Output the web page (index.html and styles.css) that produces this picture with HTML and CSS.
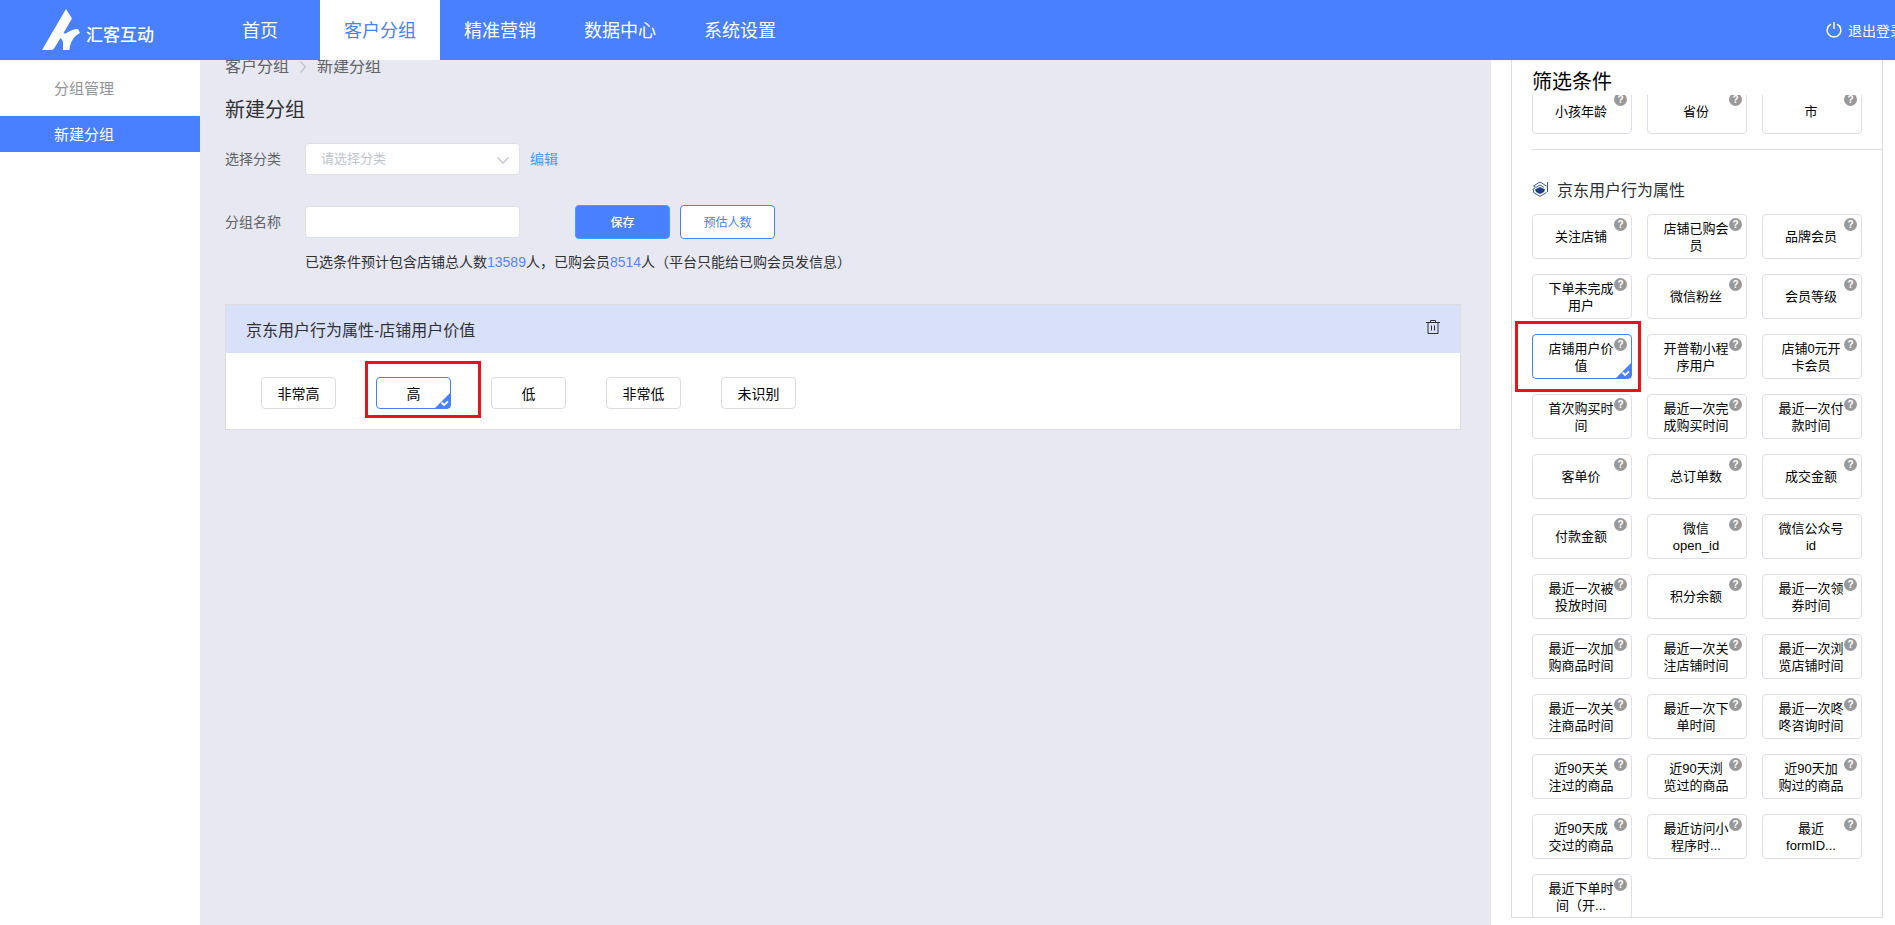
FILE: index.html
```html
<!DOCTYPE html>
<html lang="zh-CN">
<head>
<meta charset="utf-8">
<title>新建分组</title>
<link rel="stylesheet" href="styles.css">
</head>
<body>
<svg class="defs" aria-hidden="true">
  <symbol id="check" viewBox="0 0 15 15"><path d="M15 0V15H0Z" fill="#4880ff"/><path d="M6.500 9.500l2.500 2.500 4-3.500" fill="none" stroke="#fff" stroke-width="1.800"/></symbol>
</svg>
<header class="topbar">
  <a class="brand" href="#">
    <svg class="brand-mark" viewBox="0 0 38 42"><path d="M24 0L30 9.500 21.500 24C24 26 26 22 32 20.500L36 20 38 24C32 27 28 33 27.500 41H21V35C21 32 20.500 30.500 18.500 29L13 38C11.500 40.500 10.500 41 8 41H0Z" fill="#fff"/></svg>
    <span>汇客互动</span>
  </a>
  <nav class="nav">
    <a href="#">首页</a><a href="#" class="active">客户分组</a><a href="#">精准营销</a><a href="#">数据中心</a><a href="#">系统设置</a>
  </nav>
  <a class="logout" href="#">
    <svg viewBox="0 0 16 16"><path d="M5 2.200A6.800 6.800 0 1 0 11 2.200M8 0V7" fill="none" stroke="#fff" stroke-width="1.500"/></svg>
    <span>退出登录</span>
  </a>
</header>
<div class="body">
  <aside class="sidebar">
    <a href="#">分组管理</a>
    <a href="#" class="active">新建分组</a>
  </aside>
  <main class="main">
    <nav class="crumbs"><a href="#">客户分组</a><svg viewBox="0 0 6 12"><path d="M.5.500L5.500 6 .5 11.500" fill="none" stroke="#c0c4cc" stroke-width="1.300"/></svg><span>新建分组</span></nav>
    <h1>新建分组</h1>
    <form class="form">
      <div class="row">
        <label for="cat">选择分类</label>
        <span class="select"><select id="cat"><option>请选择分类</option></select><svg viewBox="0 0 12 7"><path d="M.5.500L6 6 11.500.500" fill="none" stroke="#c0c4cc" stroke-width="1.300"/></svg></span>
        <a class="edit" href="#">编辑</a>
      </div>
      <div class="row">
        <label for="name">分组名称</label>
        <input id="name" type="text">
        <div class="actions"><button type="button" class="btn primary">保存</button><button type="button" class="btn">预估人数</button></div>
      </div>
      <p class="note">已选条件预计包含店铺总人数<b>13589</b>人，已购会员<b>8514</b>人（平台只能给已购会员发信息）</p>
    </form>
    <section class="card">
      <header><h2>京东用户行为属性-店铺用户价值</h2>
        <button type="button" class="trash" aria-label="删除"><svg viewBox="0 0 14 14"><path d="M0 2.500H14M4.500 2V.500H9.500V2M2 3V13.500H12V3M5.500 5.500V10.500M8.500 5.500V10.500" fill="none" stroke="#303133"/></svg></button>
      </header>
      <div class="options">
        <button type="button">非常高</button>
        <button type="button" class="selected">高<svg class="tick"><use href="#check"/></svg><i class="mark"></i></button>
        <button type="button">低</button>
        <button type="button">非常低</button>
        <button type="button">未识别</button>
      </div>
    </section>
  </main>
  <aside class="filters">
    <h2>筛选条件</h2>
    <div class="list">
      <div class="grid first" data-items="小孩年龄,省份,市"></div>
      <h3><svg viewBox="0 0 16 16"><path d="M1.500 5L8 1 14.500 5M4 6.500L8 4 12 6.500M1.500 5L4 6.500M.5 8.500L3 7M1.500 8.500V11.500L8 15.300 14.500 11.500M15.500 1V11" fill="none" stroke="#3c5a90"/><path d="M8 6L13 8.500 12 11 8 13 4 11 3 8.500Z" fill="#1c3f7c"/></svg>京东用户行为属性</h3>
      <div class="grid" data-items="关注店铺,店铺已购会员,品牌会员,下单未完成用户,微信粉丝,会员等级,*店铺用户价值,开普勒小程序用户,店铺0元开卡会员,首次购买时间,最近一次完成购买时间,最近一次付款时间,客单价,总订单数,成交金额,付款金额,微信 open_id,-微信公众号 id,最近一次被投放时间,积分余额,最近一次领券时间,最近一次加购商品时间,最近一次关注店铺时间,最近一次浏览店铺时间,最近一次关注商品时间,最近一次下单时间,最近一次咚咚咨询时间,近90天关注过的商品,近90天浏览过的商品,近90天加购过的商品,近90天成交过的商品,最近访问小程序时...,最近 formID...,最近下单时间（开..."></div>
    </div>
  </aside>
</div>
<script src="app.js"></script>
</body>
</html>
```

FILE: styles.css
```css
* { box-sizing: border-box; }
body { margin: 0; height: 100vh; display: flex; flex-direction: column; overflow: hidden; background: #fff; color: #303133; font-family: "Liberation Sans", "Noto Sans CJK SC", sans-serif; font-size: 14px; }
a { color: inherit; text-decoration: none; }
h1, h2, h3, p { margin: 0; font-weight: 400; }
button, input, select { font: inherit; }
svg { display: block; flex: none; }
.defs { position: absolute; width: 0; height: 0; }

.topbar { flex: none; height: 60px; display: flex; align-items: center; background: #4880ff; color: #fff; position: relative; z-index: 1; overflow: hidden; }
.brand { width: 200px; flex: none; padding-left: 42px; display: flex; align-items: center; gap: 6px; font-size: 17px; font-weight: 500; }
.brand span { padding-top: 7px; }
.brand-mark { width: 38px; height: 42px; }
.nav { display: flex; flex: 1; }
.nav a { width: 120px; height: 60px; line-height: 62px; text-align: center; font-size: 18px; }
.nav .active { background: #fff; color: #4880ff; }
.logout { flex: none; display: flex; align-items: center; gap: 6px; font-size: 14px; white-space: nowrap; margin-right: -9px; }
.logout svg { width: 16px; height: 16px; }

.body { flex: 1; min-height: 0; display: flex; }
.sidebar { width: 200px; flex: none; padding-top: 10px; display: flex; flex-direction: column; gap: 10px; }
.sidebar a { height: 36px; padding-left: 54px; line-height: 38px; font-size: 15px; color: #909399; }
.sidebar .active { background: #4880ff; color: #fff; }

.main { flex: 1; min-width: 0; padding: 0 30px 0 25px; background: #e7e8f2; }
.crumbs { display: flex; align-items: center; gap: 11px; margin-top: -5px; line-height: 24px; font-size: 16px; color: #606266; }
.crumbs svg { width: 6px; height: 12px; }
h1 { margin-top: 16px; line-height: 30px; font-size: 20px; }
.form { margin-top: 17px; }
.row { display: flex; align-items: center; height: 34px; margin-bottom: 29px; }
.row label { width: 80px; padding-bottom: 3px; color: #606266; }
.row input, .select { width: 215px; height: 32px; }
.row input, .select select { border: 1px solid #dcdfe6; border-radius: 4px; background: #fff; padding: 0 15px; }
.select { position: relative; }
.select select { width: 100%; height: 100%; padding-bottom: 2px; appearance: none; font-size: 13px; color: #c0c4cc; }
.select svg { position: absolute; right: 11px; top: 14px; width: 12px; height: 7px; }
.edit { margin-left: 10px; padding-bottom: 2px; color: #409eff; }
.actions { display: flex; gap: 10px; margin-left: 55px; }
.btn { width: 95px; height: 34px; padding: 0 0 2px; border: 1px solid #4880ff; border-radius: 4px; background: #fff; color: #4880ff; font-size: 12px; }
.primary { background: #4880ff; border-color: #409eff; color: #fff; font-weight: 500; }
.note { margin: -17px 0 0 80px; line-height: 20px; padding-top: 1px; }
.note b { font-weight: 400; color: #5a84ff; }

.card { margin-top: 32px; border: 1px solid #dcdcdc; background: #fff; }
.card header { height: 48px; padding: 0 20px; display: flex; align-items: center; justify-content: space-between; background: #d8e0fa; }
.card h2 { font-size: 16px; }
.trash { border: 0; padding: 0 0 4px; background: none; }
.trash svg { width: 14px; height: 14px; }
.options { display: flex; gap: 40px; padding: 24px 35px 20px; }
.options button { position: relative; width: 75px; height: 32px; padding: 0; border: 1px solid #dcdcdc; border-radius: 4px; background: #fff; color: #000; }
.options .selected, .tile.selected { border-color: #4880ff; }
.tick { position: absolute; right: 0; bottom: 0; width: 15px; height: 15px; }
.mark { position: absolute; border: 3px solid #ea1319; pointer-events: none; }
.options .mark { left: -12px; top: -17px; width: 116px; height: 57px; }

.filters { width: 372px; flex: none; margin: 0 12px 7px 20px; border: 1px solid #dcdcdc; border-top: 0; display: flex; flex-direction: column; min-height: 0; color: #000; }
.filters h2 { flex: none; height: 35px; padding: 9px 0 0 20px; line-height: 26px; font-size: 20px; }
.list { flex: 1; min-height: 0; overflow: hidden; padding-left: 20px; }
.grid { display: grid; grid-template-columns: repeat(3, 100px); gap: 15px; }
.first { margin-top: -6px; padding-bottom: 15px; border-bottom: 1px solid #dcdfe6; }
.list h3 { display: flex; align-items: center; gap: 9px; height: 24px; margin: 27px 0 13px; font-size: 16px; color: #303133; }
.list h3 svg { width: 16px; height: 16px; }
.tile { position: relative; height: 45px; padding: 0 17px 0 15px; border: 1px solid #dcdfe6; border-radius: 4px; background: #fff; color: #000; font-size: 13px; line-height: 17px; }
.tile .q { position: absolute; right: 4px; top: 3px; width: 13px; height: 13px; border-radius: 50%; background: #999; color: #fff; font-size: 10px; font-weight: 700; line-height: 13px; text-align: center; }
.tile .mark { left: -18px; top: -14px; width: 126px; height: 71px; z-index: 1; }
```

FILE: app.js
```js
// "*" marks the selected condition, "-" one without a help badge.
document.querySelectorAll('.grid').forEach(function (grid) {
  grid.dataset.items.split(',').forEach(function (item) {
    var selected = item[0] === '*', plain = item[0] === '-';
    var tile = document.createElement('button');
    tile.type = 'button';
    tile.className = selected ? 'tile selected' : 'tile';
    tile.textContent = item.replace(/^[*-]/, '');
    if (!plain) tile.insertAdjacentHTML('beforeend', '<span class="q">?</span>');
    if (selected) tile.insertAdjacentHTML('beforeend', '<svg class="tick"><use href="#check"/></svg><i class="mark"></i>');
    grid.appendChild(tile);
  });
});
```
